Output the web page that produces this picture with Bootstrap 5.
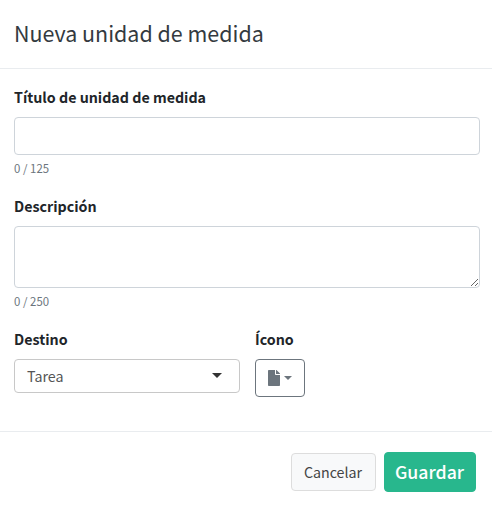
<!DOCTYPE html>
<html lang="es">
<head>
<meta charset="utf-8">
<meta name="viewport" content="width=device-width, initial-scale=1">
<title>Nueva unidad de medida</title>
<link href="https://cdn.jsdelivr.net/npm/bootstrap@5.3.0/dist/css/bootstrap.min.css" rel="stylesheet">
<style>
body { font-family: "Noto Sans CJK SC", "Noto Sans", sans-serif; font-size: 14.25px; color: #212529; background: #fff; overflow: hidden; }
.unit-dialog { height: 507px; }
.unit-head { height: 69px; padding: 0 14px 2px; border-bottom: 1px solid #e9ecef; }
.unit-title { font-size: 21.45px; font-weight: 400; line-height: 36px; color: #343a40; }
.unit-body { padding: 16px 12px 0 14px; height: 362px; }
.unit-body .form-label { display: block; line-height: 24px; font-weight: 700; }
.unit-body .form-control { border-color: #ced4da; border-radius: 4px; }
.unit-input { height: 38px; }
.unit-area { height: 62px; min-height: 62px; }
.counter { height: 19px; line-height: 19px; font-size: 11.4px; letter-spacing: .05px; color: #6c757d; }
.target-select { width: 226px; height: 34px; padding: 0 17px 0 12px; border: 1px solid #c8c8c8; border-radius: 4px; background: #fff; color: #555; font-size: 14.25px; }
.field-pair { gap: 15px; }
.icon-btn { width: 50px; height: 38px; padding: 0; border-radius: 4px; --bs-btn-bg: #fff; }
.unit-foot { height: 76px; padding: 5px 16px 0 0; border-top: 1px solid #e9ecef; }
.btn-cancel { width: 85px; height: 38px; padding: 0 1px 0 0; font-size: 14.25px; border-radius: 4px; background: #f8f9fa; border-color: #ddd; color: #444; }
.btn-save { width: 92px; height: 40px; padding: 0 1px 2px 0; font-size: 17.7px; font-weight: 500; border-radius: 4px; background: #28b78d; border-color: #28b78d; color: #fff; }
</style>
<script src="https://cdn.jsdelivr.net/npm/bootstrap@5.3.0/dist/js/bootstrap.bundle.min.js"></script>
</head>
<body>
<form class="unit-dialog d-flex flex-column">
  <header class="unit-head d-flex align-items-center">
    <h5 class="unit-title mb-0">Nueva unidad de medida</h5>
  </header>
  <main class="unit-body">
    <div class="mb-3">
      <label class="form-label mb-2" for="unitName">Título de unidad de medida</label>
      <input id="unitName" type="text" class="form-control unit-input">
      <div class="counter mt-1">0 / 125</div>
    </div>
    <div class="mb-3">
      <label class="form-label mb-2" for="unitText">Descripción</label>
      <textarea id="unitText" class="form-control unit-area"></textarea>
      <div class="counter mt-1">0 / 250</div>
    </div>
    <div class="d-flex field-pair">
      <div>
        <span class="form-label mb-2">Destino</span>
        <button type="button" class="target-select d-flex align-items-center justify-content-between">
          <span>Tarea</span>
          <svg width="10" height="6" viewBox="0 0 10 6" fill="#333" aria-hidden="true"><path d="M0 0h10L5 5z"/></svg>
        </button>
      </div>
      <div class="icon-field">
        <span class="form-label mb-2">Ícono</span>
        <button type="button" class="btn btn-outline-secondary icon-btn d-flex align-items-center justify-content-center gap-1" aria-label="Ícono">
          <svg width="12" height="16" viewBox="0 0 384 512" fill="currentColor" aria-hidden="true"><path d="M224 136V0H24C10.700 0 0 10.700 0 24v464c0 13.300 10.700 24 24 24h336c13.300 0 24-10.700 24-24V160H248c-13.200 0-24-10.800-24-24zm160-14.100v6.100H256V0h6.100c6.400 0 12.500 2.500 17 7l97.900 98c4.500 4.500 7 10.600 7 16.900z"/></svg>
          <svg width="8" height="4" viewBox="0 0 8 4" fill="currentColor" aria-hidden="true"><path d="M0 0h8L4 4z"/></svg>
        </button>
      </div>
    </div>
  </main>
  <footer class="unit-foot d-flex align-items-center justify-content-end gap-2">
    <button type="button" class="btn btn-cancel">Cancelar</button>
    <button type="button" class="btn btn-save">Guardar</button>
  </footer>
</form>
</body>
</html>
